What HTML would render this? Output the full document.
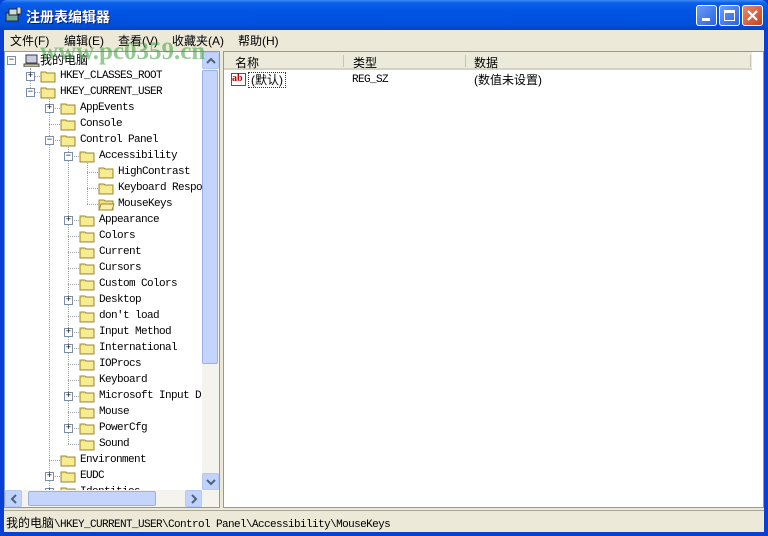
<!DOCTYPE html>
<html><head><meta charset="utf-8">
<style>
*{margin:0;padding:0;box-sizing:border-box}
body{width:768px;height:536px;overflow:hidden;background:#0a3fd6;font-family:"Liberation Sans","Noto Sans CJK SC",sans-serif;font-size:12px;position:relative}
.abs{position:absolute}
#title{left:0;top:0;width:768px;height:30px;background:linear-gradient(#3d8cf5 0,#0a5ee8 3px,#0054e3 12px,#0050dc 25px,#0842c0 30px);border-radius:7px 7px 0 0}
#title .t{left:26px;top:7px;color:#fff;font-weight:bold;font-size:14px;text-shadow:1px 1px #0a1f6b}
.btn{top:5px;width:21px;height:21px;border:1px solid #fff;border-radius:3px;background:linear-gradient(135deg,#6a9cf7,#2a62e2)}
#frame{left:4px;top:30px;width:760px;height:502px;background:#ece9d8}
#menu{left:4px;top:30px;height:18px;width:760px}
#menu span{position:absolute;top:2px;font-size:12px;color:#000}
.pane{background:#fff}
.mono{font-family:"Liberation Mono","Noto Sans CJK SC",monospace;font-size:11px;letter-spacing:-0.6px}
.row{position:absolute;height:16px;line-height:16px;white-space:nowrap}
.fold{position:absolute;width:17px;height:13px}
.exp{position:absolute;width:9px;height:9px;border:1px solid #7a8ea8;background:#fff;font-size:9px;line-height:7px;text-align:center;color:#000;font-family:"Liberation Mono",monospace}
.dv{position:absolute;border-left:1px dotted #a0a0a0;width:0}
.dh{position:absolute;border-top:1px dotted #a0a0a0;height:0}
.sb{position:absolute;width:17px;height:17px;background:#c1d3fb;border:1px solid #b4c8f6;border-radius:2px}
</style></head><body>
<div id="title" class="abs">
 <svg class="abs" style="left:5px;top:7px" width="18" height="16"><rect x="1" y="6" width="12" height="8" fill="#7a9" stroke="#223"/><rect x="4" y="2" width="10" height="6" fill="#cdd" stroke="#223"/><rect x="12" y="0" width="4" height="7" fill="#ddd" stroke="#333"/></svg>
 <div class="abs t" style="font-family:'Noto Sans CJK SC',sans-serif">注册表编辑器</div>
 <div class="abs btn" style="left:696px"><div class="abs" style="left:5px;top:12px;width:8px;height:3px;background:#fff"></div></div>
 <div class="abs btn" style="left:719px"><div class="abs" style="left:4px;top:4px;width:11px;height:11px;border:1px solid #fff;border-top:3px solid #fff"></div></div>
 <div class="abs btn" style="left:742px;background:linear-gradient(135deg,#e88a6a,#c8401e)"><svg class="abs" style="left:3px;top:3px" width="13" height="13"><path d="M2 2L11 11M11 2L2 11" stroke="#fff" stroke-width="2.2"/></svg></div>
</div>
<div id="frame" class="abs"></div>
<div id="menu" class="abs">
 <span style="left:6px">文件(F)</span><span style="left:60px">编辑(E)</span><span style="left:114px">查看(V)</span><span style="left:168px">收藏夹(A)</span><span style="left:234px">帮助(H)</span>
</div>
<div class="abs pane" style="left:4px;top:51px;width:216px;height:457px;border:1px solid #7f9db9"></div>
<div class="abs" id="tree" style="left:5px;top:52px;width:197px;height:438px;overflow:hidden"></div>
<div class="abs" style="left:202px;top:52px;width:17px;height:438px;background:#f4f3ee"></div>
<div class="sb" style="left:202px;top:52px"><svg class="abs" style="left:3px;top:4px" width="10" height="7"><path d="M1 6L5 2L9 6" stroke="#4d6185" stroke-width="2" fill="none"/></svg></div>
<div class="abs" style="left:202px;top:70px;width:16px;height:294px;background:#c4d4fb;border:1px solid #98b1ea;border-radius:2px"></div>
<div class="sb" style="left:202px;top:473px"><svg class="abs" style="left:3px;top:5px" width="10" height="7"><path d="M1 1L5 5L9 1" stroke="#4d6185" stroke-width="2" fill="none"/></svg></div>
<div class="abs" style="left:5px;top:490px;width:214px;height:17px;background:#f4f3ee"></div>
<div class="sb" style="left:5px;top:490px"><svg class="abs" style="left:4px;top:3px" width="7" height="10"><path d="M6 1L2 5L6 9" stroke="#4d6185" stroke-width="2" fill="none"/></svg></div>
<div class="abs" style="left:28px;top:491px;width:128px;height:15px;background:#c4d4fb;border:1px solid #98b1ea;border-radius:2px"></div>
<div class="sb" style="left:185px;top:490px"><svg class="abs" style="left:5px;top:3px" width="7" height="10"><path d="M1 1L5 5L1 9" stroke="#4d6185" stroke-width="2" fill="none"/></svg></div>
<div class="abs pane" style="left:223px;top:51px;width:541px;height:457px;border:1px solid #7f9db9"></div>
<div class="abs" style="left:224px;top:52px;width:528px;height:18px;background:#ebeadb;border-bottom:2px solid #d6d2c2"></div>
<div class="abs" style="left:343px;top:55px;width:1px;height:12px;background:#c7c5b2"></div>
<div class="abs" style="left:465px;top:55px;width:1px;height:12px;background:#c7c5b2"></div>
<div class="abs" style="left:750px;top:55px;width:1px;height:12px;background:#c7c5b2"></div>
<div class="abs" style="left:235px;top:54px">名称</div>
<div class="abs" style="left:353px;top:54px">类型</div>
<div class="abs" style="left:474px;top:54px">数据</div>
<div class="abs" style="left:231px;top:73px;width:15px;height:13px;border:1px solid #555;background:#fff;color:#b00;font-weight:bold;font-size:10px;line-height:10px;font-family:'Liberation Serif',serif">ab</div>
<div class="abs" style="left:248px;top:72px;border:1px dotted #333;padding:0 2px;height:16px;line-height:14px">(默认)</div>
<div class="abs mono" style="left:352px;top:72px;line-height:16px">REG_SZ</div>
<div class="abs" style="left:474px;top:72px;line-height:16px">(数值未设置)</div>
<div class="abs" style="left:4px;top:510px;width:760px;height:1px;background:#aca899"></div>
<div class="abs mono" style="left:6px;top:514px;font-size:11px"><span style="font-family:'Noto Sans CJK SC';letter-spacing:0;font-size:12px">我的电脑</span>\HKEY_CURRENT_USER\Control Panel\Accessibility\MouseKeys</div>
<div class="abs" style="left:40px;top:38px;color:rgba(60,160,60,0.55);font-weight:bold;font-size:25px;font-family:'Liberation Serif',serif">www.pc0359.cn</div>
<script>
var rows=[
[0,'我的电脑','-'],[1,'HKEY_CLASSES_ROOT','+'],[1,'HKEY_CURRENT_USER','-'],[2,'AppEvents','+'],[2,'Console',''],[2,'Control Panel','-'],
[3,'Accessibility','-'],[4,'HighContrast',''],[4,'Keyboard Respo',''],[4,'MouseKeys','',1],[3,'Appearance','+'],[3,'Colors',''],[3,'Current',''],[3,'Cursors',''],[3,'Custom Colors',''],[3,'Desktop','+'],[3,"don't load",''],[3,'Input Method','+'],[3,'International','+'],[3,'IOProcs',''],[3,'Keyboard',''],[3,'Microsoft Input D','+'],[3,'Mouse',''],[3,'PowerCfg','+'],[3,'Sound',''],[2,'Environment',''],[2,'EUDC','+'],[2,'Identities','+']];
var lx=[6,25,44,63,82],fx=[18,35,55,74,93],tx=[35,55,75,94,113];
var h='';
h+='<div class="dv" style="left:25px;top:16px;height:24px"></div>';
h+='<div class="dv" style="left:44px;top:40px;height:440px"></div>';
h+='<div class="dv" style="left:63px;top:88px;height:304px"></div>';
h+='<div class="dv" style="left:82px;top:104px;height:48px"></div>';
rows.forEach(function(r,i){
 var L=r[0],y=i*16;
 if(L>0) h+='<div class="dh" style="left:'+lx[L]+'px;top:'+(y+8)+'px;width:'+(fx[L]-lx[L])+'px"></div>';
 if(r[2]) h+='<div class="exp" style="left:'+(lx[L]-4)+'px;top:'+(y+4)+'px">'+(r[2]=='+'?'+':'−')+'</div>';
 if(L==0){h+='<svg class="fold" style="left:18px;top:'+(y+2)+'px" width="17" height="14"><rect x="3" y="1" width="11" height="8" fill="#ccd" stroke="#335"/><rect x="1" y="10" width="15" height="3" fill="#bba" stroke="#554"/></svg>';
  h+='<div class="row" style="left:35px;top:'+y+'px">'+r[1]+'</div>';}
 else{
  var op=r[3];
  h+='<svg class="fold" style="left:'+fx[L]+'px;top:'+(y+2)+'px" width="17" height="13"><path d="M1 2h5l1 1h8v9H1z" fill="#f5e07a" stroke="#9a8a3a"/>'+(op?'<path d="M3 6h13l-2 6H1z" fill="#fbf0a8" stroke="#9a8a3a"/>':'<rect x="2" y="4" width="12" height="7" fill="#f8ec90"/>')+'</svg>';
  h+='<div class="row mono" style="left:'+tx[L]+'px;top:'+y+'px">'+r[1]+'</div>';}
});
document.getElementById('tree').innerHTML=h;
</script>
</body></html>
